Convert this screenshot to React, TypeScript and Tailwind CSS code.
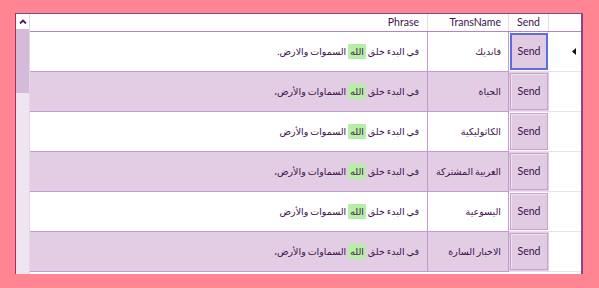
const rows = [
  { name: "فانديك", pre: "في البدء خلق ", post: " السموات والارض.", alt: false },
  { name: "الحياة", pre: "في البدء خلق ", post: " السماوات والأرض،", alt: true },
  { name: "الكاثوليكية", pre: "في البدء خلق ", post: " السموات والأرض", alt: false },
  { name: "العربية المشتركة", pre: "في البدء خلق ", post: " السماوات والأرض،", alt: true },
  { name: "اليسوعية", pre: "في البدء خلق ", post: " السموات والأرض", alt: false },
  { name: "الاخبار السارة", pre: "في البدء خلق ", post: " السماوات والأرض،", alt: true },
];

const font = { fontFamily: 'Lato, "Noto Sans", "DejaVu Sans", sans-serif' };

export default function App() {
  return (
    <div className="w-[599px] h-[288px] bg-[#ff8592] overflow-hidden pt-[13px] pl-[15px]" style={font}>
      {/* Grid frame */}
      <div className="flex w-[568px] h-[261px] border-l border-l-[#a8305e] border-t border-t-[#7d4a8f] border-r-2 border-r-[#7d4a8f] bg-white overflow-hidden">
        {/* Vertical scrollbar */}
        <div className="w-[14px] shrink-0 flex flex-col bg-[#efe5f1] border-r border-[#e4d6e7]">
          <div className="h-[15px] flex items-center justify-center bg-white">
            <svg width="8" height="5" viewBox="0 0 8 5">
              <path d="M1 4.5 L4 1.5 L7 4.5" fill="none" stroke="#4a1e5a" strokeWidth="1.8" />
            </svg>
          </div>
          <div className="h-[64px] bg-[#d3bbd9]" />
        </div>

        {/* Grid body */}
        <div className="flex-1 flex flex-col text-[10.5px] text-[#3c1249]">
          {/* Header */}
          <div className="flex h-[18px] shrink-0 border-b border-[#b784c0] bg-white">
            <div className="w-[398px] border-r border-[#e6d8e9] flex items-center justify-end pr-[8px]">Phrase</div>
            <div className="w-[81px] border-r border-[#e6d8e9] flex items-center justify-end pr-[7px]">TransName</div>
            <div className="w-[40px] border-r border-[#e6d8e9] flex items-center justify-center">Send</div>
            <div className="flex-1" />
          </div>

          {rows.map((r, i) => (
            <div key={i} className="flex h-[40px] shrink-0">
              <div
                dir="rtl"
                className={`w-[398px] border-r border-b border-[#c59dcc] flex items-center pr-[8px] pt-[2px] whitespace-nowrap text-[9.5px] [word-spacing:-0.5px] ${r.alt ? "bg-[#e2cde4]" : "bg-white"}`}
              >
                <span>
                  {r.pre}
                  <span className="bg-[#b6eea8] px-[2px] py-[2px]">الله</span>
                  {r.post}
                </span>
              </div>
              <div
                dir="rtl"
                className={`w-[81px] border-r border-b border-[#c59dcc] flex items-center pr-[7px] pt-[2px] whitespace-nowrap text-[9.5px] [word-spacing:-0.5px] ${r.alt ? "bg-[#e2cde4]" : "bg-white"}`}
              >
                {r.name}
              </div>
              <div className={`w-[40px] p-[1px] border-b border-[#e9dcec] ${r.alt ? "bg-[#e2cde4]" : "bg-white"}`}>
                <div
                  className={`h-full flex items-center justify-center bg-[#e0cbe3] ${
                    i === 0 ? "border-2 border-[#5f6be0]" : "border border-[#c7a3cc] shadow-[inset_1px_1px_0_#eee2f0]"
                  }`}
                >
                  Send
                </div>
              </div>
              <div className="flex-1 bg-white border-b border-[#ebe1ed] flex items-center justify-end pr-[5px]">
                {i === 0 && (
                  <svg width="4" height="7" viewBox="0 0 4 7">
                    <path d="M4 0 L0 3.5 L4 7 Z" fill="#111" />
                  </svg>
                )}
              </div>
            </div>
          ))}
        </div>
      </div>
    </div>
  );
}
